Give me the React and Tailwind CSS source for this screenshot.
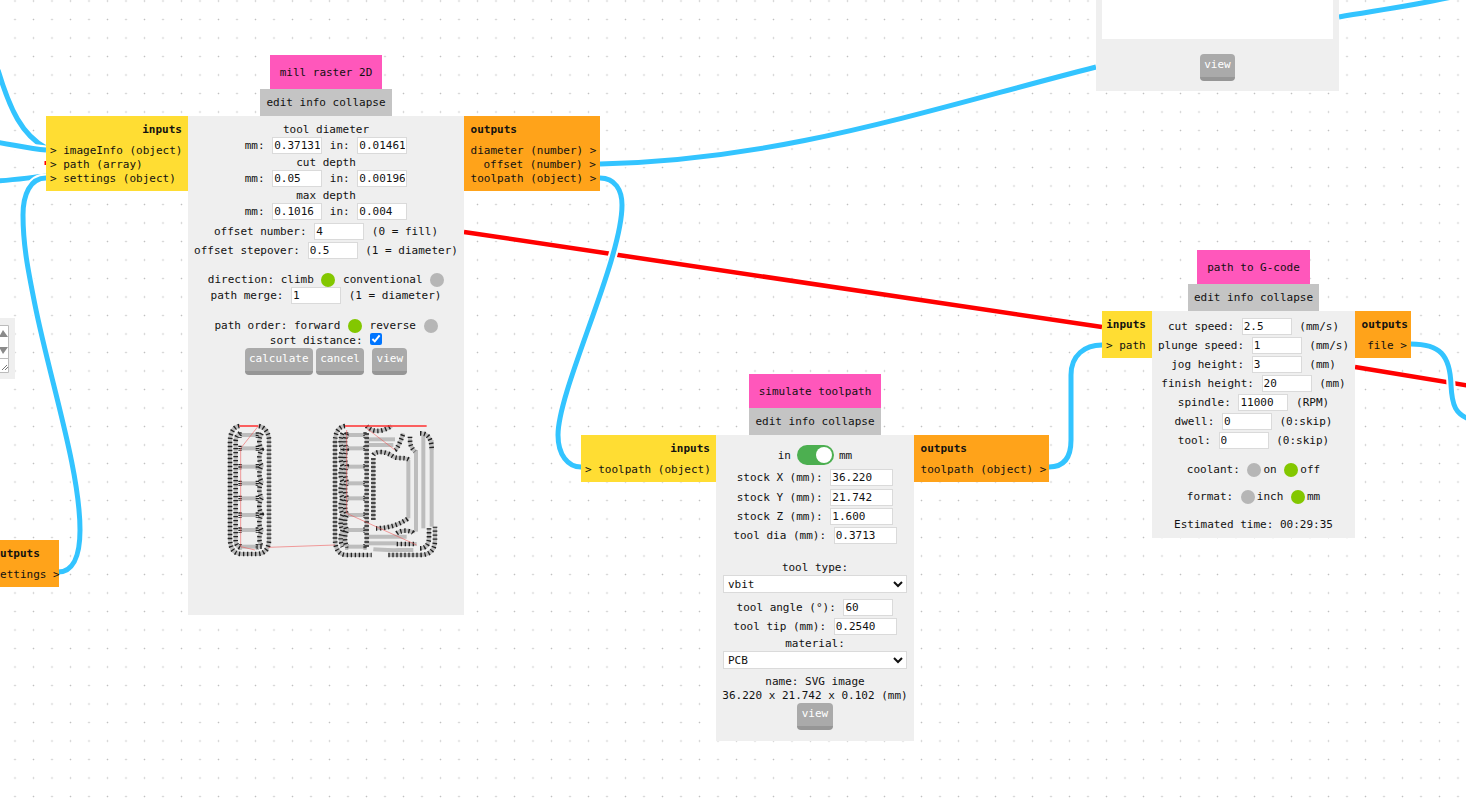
import { Fragment } from 'react';

const Wires = () => {
  const blue = [
    'M600 164 C 780 160 920 112 1096 67',
    'M1339 17 C 1380 10 1410 6 1452 -3',
    'M600 178 C 615 178 622 190 622 205 C 622 260 558 390 558 435 C 558 455 568 467 581 467',
    'M1049 467 C 1062 467 1071 460 1071 440 L 1071 375 C 1071 355 1085 345 1102 345',
    'M1411 344 C 1440 344 1450 355 1451 385 C 1452 405 1455 415 1472 420',
    'M-2 70 C 10 110 22 135 46 148',
    'M-10 141 C 15 145 30 149 46 150',
    'M-10 181 C 10 181 25 178 46 176',
    'M58 572 C 72 572 80 558 80 530 C 80 470 50 380 35 305 C 28 270 23 245 23 215 C 23 195 30 178 46 178',
  ];
  return (
    <svg className="absolute inset-0" width="1466" height="806" fill="none">
      <path d="M464 232 L1102 327" stroke="#ff0000" strokeWidth="4.5" />
      <path d="M1355 367 L1470 386" stroke="#ff0000" strokeWidth="4.5" />
      <path d="M44.5 163 H46" stroke="#ff0000" strokeWidth="4" />
      {blue.map((d) => (
        <Fragment key={d}>
          <path d={d} stroke="#ffffff" strokeWidth="9" />
          <path d={d} stroke="#33c4ff" strokeWidth="5" />
        </Fragment>
      ))}
    </svg>
  );
};

// wavy column for the scalloped offsets of the toolpath
const scallop = (x, y0, y1, amp, n) => {
  const step = (y1 - y0) / n;
  let d = `M${x} ${y0}`;
  for (let i = 0; i < n; i++) {
    d += ` Q${x + amp} ${y0 + step * (i + 0.5)} ${x} ${y0 + step * (i + 1)}`;
  }
  return d;
};

const Preview = () => {
  const rows = [105, 145, 200, 250, 295, 345, 390, 440];
  const ticked = [
    'M118 78 C100 80 90 100 90 125 V415 C90 445 100 462 125 462 H170 C195 462 207 445 207 420 V120 C207 100 195 80 175 78',
    'M120 100 C112 105 107 112 107 125 V420 C107 435 115 442 125 444',
    scallop(185, 100, 440, -14, 7),
    'M185 440 H170',
    'M435 78 C415 80 405 100 405 125 V415 C405 445 415 465 440 465 H515',
    scallop(428, 100, 440, -12, 7),
    scallop(440, 100, 440, -10, 7),
    'M565 465 H660 C690 465 705 450 705 420 V380',
    'M660 445 C680 445 687 430 687 412 V385',
    'M500 78 C515 95 540 100 575 78',
    'M520 165 C530 150 560 155 580 170 C595 178 615 170 628 180',
    'M520 175 V360',
    'M528 385 C550 385 590 380 625 355',
    'M585 150 C595 145 610 100 610 100 M630 110 C630 130 630 140 645 155',
    'M660 100 C680 100 695 110 695 150',
    'M500 100 V440',
    'M590 400 C610 385 640 395 640 400 M590 432 H650',
  ];
  const plain = [
    'M625 180 V355', 'M648 150 V395', 'M670 105 V385', 'M695 120 V380',
    'M500 410 H620', 'M500 430 H590', 'M520 448 C560 452 580 450 640 450',
    'M500 118 H585', 'M500 135 H580',
  ];
  return (
    <svg className="mt-[25px] shrink-0" width="250" height="170" viewBox="0 0 750 510" fill="none">
      {rows.map((y) => (
        <Fragment key={y}>
          <path d={`M122 ${y} H172`} stroke="#bdbdbd" strokeWidth="12" />
          <path d={`M440 ${y} H500`} stroke="#bdbdbd" strokeWidth="12" />
          <path d={`M120 ${y - 8} V${y + 8} M172 ${y - 8} V${y + 8} M440 ${y - 8} V${y + 8} M495 ${y - 8} V${y + 8}`} stroke="#222" strokeWidth="10" strokeDasharray="4 3" />
        </Fragment>
      ))}
      {plain.map((d) => <path key={d} d={d} stroke="#bdbdbd" strokeWidth="12" />)}
      {ticked.map((d) => (
        <Fragment key={d}>
          <path d={d} stroke="#bdbdbd" strokeWidth="12" />
          <path d={d} stroke="#222" strokeWidth="14" strokeDasharray="4 8" />
        </Fragment>
      ))}
      <path d="M118 78 H175 M435 78 H680" stroke="#ff3030" strokeWidth="5" />
      <path d="M175 78 L122 145 V440 M122 440 L165 450 M205 442 L405 435 M440 90 V340 L650 435 M500 85 L585 150" stroke="#f05050" strokeWidth="2.5" opacity="0.65" />
    </svg>
  );
};

const Field = ({ value, className = 'w-[50px]' }) => (
  <input
    defaultValue={value}
    className={`-mt-[2px] h-[17px] shrink-0 border-[1.5px] border-[#dadada] bg-white px-px text-[11px] leading-none text-[#111] ${className}`}
  />
);

const Row = ({ className = '', children }) => (
  <div className={`box-border flex h-[14px] shrink-0 items-center justify-center gap-px whitespace-pre pt-[2px] ${className}`}>
    {children}
  </div>
);

const Dot = ({ on }) => (
  <span className={`h-[14px] w-[14px] shrink-0 rounded-full ${on ? 'bg-[#83c700]' : 'bg-[#b6b6b6]'}`} />
);

const Btn = ({ children }) => (
  <button className="h-[27px] rounded-[4px] border-b-[4px] border-[#969696] bg-[#aaaaaa] px-[4.3px] text-[11px] text-white">
    {children}
  </button>
);

const Inputs = ({ ports, className }) => (
  <div className={`mt-[61px] flex flex-col bg-[#ffdd33] pt-[7px] pr-[6px] pb-[5px] pl-[4px] leading-[14px] ${className}`}>
    <div className="mb-[7px] text-right font-bold">inputs</div>
    {ports.map((p) => (
      <div key={p} className="whitespace-pre">{`> ${p}`}</div>
    ))}
  </div>
);

const Outputs = ({ ports, className }) => (
  <div className={`mt-[61px] flex flex-col bg-[#ffa31a] pt-[7px] pr-[4px] pb-[5px] pl-[6.6px] leading-[14px] ${className}`}>
    <div className="mb-[7px] font-bold">outputs</div>
    {ports.map((p) => (
      <div key={p} className="whitespace-pre text-right">{`${p} >`}</div>
    ))}
  </div>
);

const Module = ({ pos, title, inputs, outputs, inW, outW, bodyClass, children }) => (
  <div className={`absolute flex items-start ${pos}`}>
    <Inputs ports={inputs} className={inW} />
    <div className="flex flex-col items-center">
      <div className="flex h-[34px] items-center bg-[#ff57bb] px-[10px] pt-[2px]">{title}</div>
      <div className="flex h-[27px] items-center whitespace-pre bg-[#c4c4c4] px-[6px] pt-[2px]">edit info collapse</div>
      <div className={`flex flex-col items-stretch bg-[#efefef] ${bodyClass}`}>{children}</div>
    </div>
    <Outputs ports={outputs} className={outW} />
  </div>
);

export default function App() {
  return (
    <div
      className="relative h-[806px] w-full overflow-hidden bg-white bg-[radial-gradient(circle,#c0c0c0_0.6px,transparent_1.1px)] bg-[size:18.5px_18.5px] bg-[position:5.75px_-8.25px] font-['DejaVu_Sans_Mono','Liberation_Mono',monospace] text-[11px] text-[#111]"
    >
      <Wires />

      {/* cut off panel at the left edge */}
      <div className="absolute top-[318px] left-0 h-[61px] w-[15px] bg-[#efefef] pt-[7px]">
        <svg width="9" height="48" viewBox="0 0 9 48" className="bg-white">
          <path d="M0 .5 H8.5 V47.5 H0 M0 33.5 H8.5" fill="none" stroke="#bbb" />
          <path d="M-1 12 L3 5 L8 12 Z M-1 22 H8 L3 29 Z" fill="#8a8a8a" />
          <path d="M2 45 L7 40 M5 45 L8 42" stroke="#777" />
        </svg>
      </div>

      {/* settings outputs cut off at the left edge */}
      <div className="absolute top-[540px] left-[-20px] flex w-[79px] flex-col bg-[#ffa31a] pt-[7px] pr-[7px] pb-[5px] pl-[13.4px] leading-[14px]">
        <div className="mb-[7px] font-bold">outputs</div>
        <div className="text-right whitespace-pre">settings &gt;</div>
      </div>

      {/* mesh view panel, top right */}
      <div className="absolute top-0 left-[1096px] flex h-[91px] w-[243px] flex-col items-center bg-[#efefef]">
        <div className="h-[39px] w-[231px] bg-white" />
        <div className="mt-[15px]"><Btn>view</Btn></div>
      </div>

      <Module
        pos="left-[46px] top-[55px]"
        title="mill raster 2D"
        inputs={['imageInfo (object)', 'path (array)', 'settings (object)']}
        outputs={['diameter (number)', 'offset (number)', 'toolpath (object)']}
        inW="w-[142px]"
        outW="w-[136px]"
        bodyClass="h-[499px] w-[276px] pt-[6px]"
      >
        <Row>tool diameter</Row>
        <Row className="mt-px !h-[17px]">mm: <Field value="0.37131" /> in: <Field value="0.01461" /></Row>
        <Row className="mt-px">cut depth</Row>
        <Row className="mt-px !h-[17px]">mm: <Field value="0.05" /> in: <Field value="0.00196" /></Row>
        <Row className="mt-px">max depth</Row>
        <Row className="mt-px !h-[17px]">mm: <Field value="0.1016" /> in: <Field value="0.004" /></Row>
        <Row className="mt-[3px] !h-[17px]">offset number: <Field value="4" /> (0 = fill)</Row>
        <Row className="mt-[2px] !h-[17px]">offset stepover: <Field value="0.5" /> (1 = diameter)</Row>
        <Row className="mt-[13px]">direction: climb <Dot on /> conventional <Dot /></Row>
        <Row className="mt-px !h-[17px]">path merge: <Field value="1" /> (1 = diameter)</Row>
        <Row className="mt-[14px]">path order: forward <Dot on /> reverse <Dot /></Row>
        <Row className="mt-px">sort distance: <input type="checkbox" defaultChecked className="mb-[5px] h-[12px] w-[12px] shrink-0" /></Row>
        <div className="mt-px flex justify-center gap-[3px]">
          <Btn>calculate</Btn>
          <Btn>cancel</Btn>
          <span className="ml-[5px]"><Btn>view</Btn></span>
        </div>
        <div className="flex justify-center pr-[2px]"><Preview /></div>
      </Module>

      <Module
        pos="left-[581px] top-[374px]"
        title="simulate toolpath"
        inputs={['toolpath (object)']}
        outputs={['toolpath (object)']}
        inW="w-[135px]"
        outW="w-[135px]"
        bodyClass="h-[306px] w-[198px] pt-[10px]"
      >
        <Row className="!h-[20px] !pt-0">
          <span className="pt-[2px]">in</span>
          <span className="ml-[5px] flex h-[20px] w-[37px] items-center justify-end rounded-full bg-[#4caf50] pr-[2px]">
            <span className="h-[16px] w-[16px] rounded-full bg-white" />
          </span>
          <span className="ml-[4px] pt-[2px]">mm</span>
        </Row>
        <Row className="mt-[4px] !h-[17px]">stock X (mm): <Field value="36.220" className="w-[63px]" /></Row>
        <Row className="mt-[3px] !h-[17px]">stock Y (mm): <Field value="21.742" className="w-[63px]" /></Row>
        <Row className="mt-[2px] !h-[17px]">stock Z (mm): <Field value="1.600" className="w-[63px]" /></Row>
        <Row className="mt-[2px] !h-[17px]">tool dia (mm): <Field value="0.3713" className="w-[63px]" /></Row>
        <Row className="mt-[16px]">tool type:</Row>
        <select defaultValue="vbit" className="mx-[7px] mt-px h-[18px] border-[1.5px] border-[#dadada] bg-white text-[11px] text-[#111]">
          <option value="vbit">vbit</option>
        </select>
        <Row className="mt-[6px] !h-[17px]">tool angle (°): <Field value="60" /></Row>
        <Row className="mt-[2px] !h-[17px]">tool tip (mm): <Field value="0.2540" className="w-[63px]" /></Row>
        <Row className="mt-px">material:</Row>
        <select defaultValue="PCB" className="mx-[7px] mt-px h-[18px] border-[1.5px] border-[#dadada] bg-white text-[11px] text-[#111]">
          <option value="PCB">PCB</option>
        </select>
        <Row className="mt-[5px]">name: SVG image</Row>
        <Row>36.220 x 21.742 x 0.102 (mm)</Row>
        <div className="mt-px flex justify-center"><Btn>view</Btn></div>
      </Module>

      <Module
        pos="left-[1102px] top-[250px]"
        title="path to G-code"
        inputs={['path']}
        outputs={['file']}
        inW="w-[50px]"
        outW="w-[56px]"
        bodyClass="h-[227px] w-[203px] pt-[7px]"
      >
        <Row className="!h-[17px]">cut speed: <Field value="2.5" /> (mm/s)</Row>
        <Row className="mt-[2px] !h-[17px]">plunge speed: <Field value="1" /> (mm/s)</Row>
        <Row className="mt-[2px] !h-[17px]">jog height: <Field value="3" /> (mm)</Row>
        <Row className="mt-[2px] !h-[17px]">finish height: <Field value="20" /> (mm)</Row>
        <Row className="mt-[2px] !h-[17px]">spindle: <Field value="11000" /> (RPM)</Row>
        <Row className="mt-[2px] !h-[17px]">dwell: <Field value="0" /> (0:skip)</Row>
        <Row className="mt-[2px] !h-[17px]">tool: <Field value="0" /> (0:skip)</Row>
        <Row className="mt-[13px]">
          coolant: <Dot /><span className="ml-px">on </span><Dot on /><span className="ml-px">off</span>
        </Row>
        <Row className="mt-[13px]">
          format: <Dot /><span className="ml-px">inch </span><Dot on /><span className="ml-px">mm</span>
        </Row>
        <Row className="mt-[14px]">Estimated time: 00:29:35</Row>
      </Module>
    </div>
  );
}
